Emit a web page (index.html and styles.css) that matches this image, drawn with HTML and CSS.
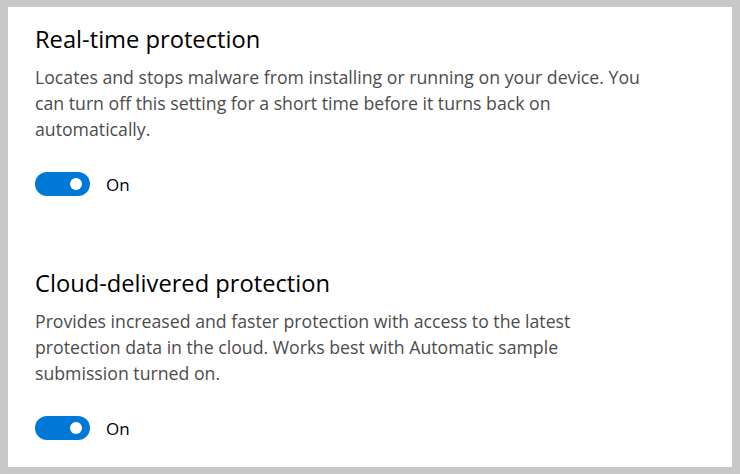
FILE: index.html
```html
<!DOCTYPE html>
<html lang="en">
<head>
<meta charset="utf-8">
<link rel="stylesheet" href="styles.css">
</head>
<body>
<div class="frame">
  <main class="panel">
    <section class="setting">
      <h2 class="title">Real-time protection</h2>
      <p class="desc">Locates and stops malware from installing or running on your device. You<br>can turn off this setting for a short time before it turns back on<br>automatically.</p>
      <div class="toggle-row">
        <span class="toggle"><span class="knob"></span></span>
        <span class="state">On</span>
      </div>
    </section>
    <section class="setting second">
      <h2 class="title">Cloud-delivered protection</h2>
      <p class="desc">Provides increased and faster protection with access to the latest<br>protection data in the cloud. Works best with Automatic sample<br>submission turned on.</p>
      <div class="toggle-row">
        <span class="toggle"><span class="knob"></span></span>
        <span class="state">On</span>
      </div>
    </section>
  </main>
</div>
</body>
</html>
```
FILE: styles.css
```css
* { box-sizing: border-box; }
html, body { margin: 0; padding: 0; }
body {
  width: 740px;
  height: 474px;
  background: #c8c8c8;
  font-family: "Open Sans", "Noto Sans", sans-serif;
  overflow: hidden;
}
.frame {
  padding: 7px 8px 7px 8px;
  height: 474px;
}
.panel {
  background: #ffffff;
  height: 460px;
  padding: 16px 0 0 27px;
}
.setting { display: flex; flex-direction: column; }
.second { margin-top: 71px; }
.title {
  margin: 0;
  font-size: 23.7px;
  line-height: 32px;
  font-weight: 400;
  color: #000;
}
.desc {
  margin: 9px 0 0 0;
  font-size: 17.7px;
  line-height: 26px;
  color: #4c4c4c;
}
.toggle-row {
  margin-top: 30px;
  display: flex;
  align-items: center;
  height: 24px;
}
.toggle {
  width: 55px;
  height: 24px;
  border-radius: 12px;
  background: #0078d7;
  display: flex;
  align-items: center;
  justify-content: flex-end;
  padding-right: 8px;
}
.knob {
  width: 12px;
  height: 12px;
  border-radius: 50%;
  background: #fff;
}
.state {
  margin-left: 16px;
  font-size: 17px;
  color: #000;
}
```
